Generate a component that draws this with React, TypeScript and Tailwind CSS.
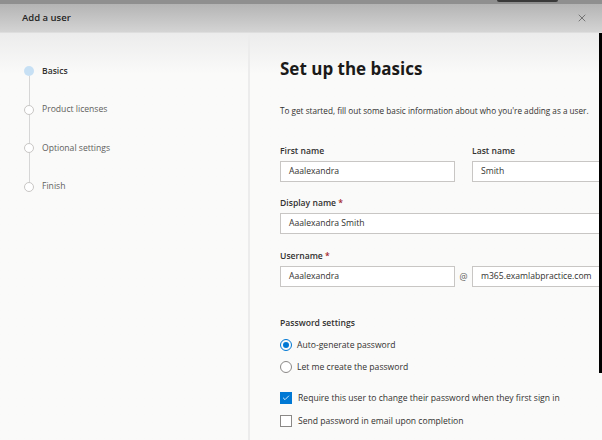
import { X, Check } from "lucide-react";

const steps = [
  { label: "Basics", active: true },
  { label: "Product licenses" },
  { label: "Optional settings" },
  { label: "Finish" },
];

function Field({ label, value, required, className }: { label: string; value: string; required?: boolean; className?: string }) {
  return (
    <div className={className}>
      <div className="text-[8.6px] font-semibold text-[#323130] h-[14px] leading-[14px]">
        {label}
        {required && <span className="text-[#a4262c]"> *</span>}
      </div>
      <div className="mt-[3px] h-[21px] border border-[#c8c6c4] bg-white flex items-center px-[8px] text-[8.6px] text-[#323130]">
        {value}
      </div>
    </div>
  );
}

export default function App() {
  return (
    <div className="relative w-[602px] h-[440px] overflow-hidden flex flex-col bg-[#fafaf9] font-['Open_Sans',sans-serif]">
      {/* dimmed page behind the panel */}
      <div className="relative h-[4px] bg-[#8f8f8f] shrink-0">
        <div className="absolute left-[497px] top-0 w-[61px] h-[2px] rounded-b bg-[#3a3a3a]" />
      </div>
      <div className="h-[29px] shrink-0 flex items-center justify-between pl-[22px] pr-[14px] bg-linear-to-b from-[#b4b4b4] to-[#d4d4d4] border-b border-[#dedede]">
        <span className="text-[9.5px] font-semibold text-[#252525]">Add a user</span>
        <X className="w-[12px] h-[12px] text-[#5a5a5a]" strokeWidth={1.5} />
      </div>

      <div className="flex flex-1 bg-linear-to-b from-[#ececec] via-[#fafaf9] via-10% to-[#fafaf9]">
        <div className="w-[250px] shrink-0 border-r-2 border-[#ececec] pt-[33px] pl-[24px]">
          {steps.map((s, i) => (
            <div key={s.label} className="flex flex-col">
              <div className="flex items-center gap-[8px] h-[10px]">
                <div
                  className={
                    s.active
                      ? "w-[10px] h-[10px] rounded-full bg-[#c7e0f4]"
                      : "w-[10px] h-[10px] rounded-full border border-[#c8c6c4] bg-white"
                  }
                />
                <span className={s.active ? "text-[8.6px] font-semibold text-[#323130]" : "text-[8.6px] text-[#605e5c]"}>
                  {s.label}
                </span>
              </div>
              {i < steps.length - 1 && <div className="ml-[4.5px] w-px h-[28.5px] bg-[#d6d6d6]" />}
            </div>
          ))}
        </div>

        <div className="flex-1 pl-[30px] pt-[23px] whitespace-nowrap">
          <h1 className="text-[17px] font-bold text-[#1b1a19] leading-[26px]">Set up the basics</h1>
          <p className="mt-[22px] text-[8.2px] text-[#323130] leading-[14px]">
            To get started, fill out some basic information about who you're adding as a user.
          </p>

          <div className="mt-[26px] flex gap-[17px]">
            <Field label="First name" value="Aaalexandra" className="w-[175px]" />
            <Field label="Last name" value="Smith" className="w-[160px]" />
          </div>

          <Field label="Display name" value="Aaalexandra Smith" required className="mt-[14px] w-[330px]" />

          <div className="mt-[15px] flex items-end">
            <Field label="Username" value="Aaalexandra" required className="w-[175px]" />
            <span className="w-[17px] h-[21px] flex items-center justify-center text-[9px] text-[#605e5c]">@</span>
            <div className="w-[160px] h-[21px] border border-[#c8c6c4] bg-white flex items-center px-[8px] text-[8.6px] text-[#323130]">
              m365.examlabpractice.com
            </div>
          </div>

          <div className="mt-[29px] text-[8.6px] font-semibold text-[#323130] leading-[14px]">Password settings</div>

          <div className="mt-[9px] flex flex-col gap-[10px] text-[8.6px] text-[#323130]">
            <label className="flex items-center gap-[5px] h-[12px]">
              <span className="w-[12px] h-[12px] rounded-full border border-[#0078d4] flex items-center justify-center">
                <span className="w-[6px] h-[6px] rounded-full bg-[#0078d4]" />
              </span>
              Auto-generate password
            </label>
            <label className="flex items-center gap-[5px] h-[12px]">
              <span className="w-[12px] h-[12px] rounded-full border border-[#8a8886] bg-white" />
              Let me create the password
            </label>
          </div>

          <div className="mt-[19px] flex flex-col gap-[11px] text-[8.6px] text-[#323130]">
            <label className="flex items-center gap-[6px] h-[12px]">
              <span className="w-[12px] h-[12px] bg-[#0078d4] flex items-center justify-center">
                <Check className="w-[8px] h-[8px] text-white" strokeWidth={2.5} />
              </span>
              Require this user to change their password when they first sign in
            </label>
            <label className="flex items-center gap-[6px] h-[12px]">
              <span className="w-[12px] h-[12px] border border-[#8a8886] bg-white" />
              Send password in email upon completion
            </label>
          </div>
        </div>
      </div>

      {/* dark edge of the screen recording */}
      <div className="absolute right-0 top-[33px] w-[3px] h-[340px] bg-black" />
    </div>
  );
}
